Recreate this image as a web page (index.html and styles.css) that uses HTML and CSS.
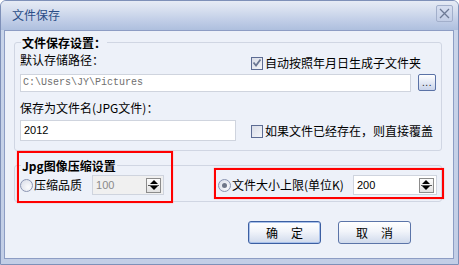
FILE: index.html
```html
<!DOCTYPE html>
<html lang="zh-CN">
<head>
<meta charset="utf-8">
<title>文件保存</title>
<link rel="stylesheet" href="styles.css">
</head>
<body>
<div class="window">
  <div class="titlebar">
    <span class="title">文件保存</span>
    <span class="close" aria-label="关闭">
      <svg width="11" height="11" viewBox="0 0 11 11"><path d="M1 1L10 10M10 1L1 10" stroke="#6d7a95" stroke-width="1.3" fill="none"/></svg>
    </span>
  </div>
  <div class="client">
    <div class="group group-save">
      <div class="group-title">文件保存设置：</div>
      <div class="row row-path-label">
        <span class="label">默认存储路径：</span>
        <label class="check check-auto">
          <span class="box checked"><svg width="10" height="10" viewBox="0 0 10 10"><path d="M1.5 4.5L4 7.5L8.5 1.5" stroke="#6b7793" stroke-width="1.8" fill="none"/></svg></span>
          <span class="check-text">自动按照年月日生成子文件夹</span>
        </label>
      </div>
      <div class="row row-path">
        <div class="textbox path">C:\Users\JY\Pictures</div>
        <div class="browse"><span>...</span></div>
      </div>
      <div class="row row-name-label">
        <span class="label">保存为文件名(JPG文件)：</span>
      </div>
      <div class="row row-name">
        <div class="textbox name">2012</div>
        <label class="check check-over">
          <span class="box"></span>
          <span class="check-text">如果文件已经存在，则直接覆盖</span>
        </label>
      </div>
    </div>
    <div class="group group-jpg">
      <div class="group-title">Jpg图像压缩设置</div>
      <div class="row row-jpg">
        <label class="radio radio-quality"><span class="circle"></span><span class="radio-text">压缩品质</span></label>
        <div class="spin disabled"><span class="spin-value">100</span><span class="spin-btn"><i class="up"></i><i class="down"></i></span></div>
        <label class="radio radio-size"><span class="circle on"></span><span class="radio-text">文件大小上限(单位K)</span></label>
        <div class="spin size"><span class="spin-value">200</span><span class="spin-btn"><i class="up"></i><i class="down"></i></span></div>
      </div>
    </div>
    <div class="buttons">
      <div class="btn default"><span>确</span><span>定</span></div>
      <div class="btn"><span>取</span><span>消</span></div>
    </div>
    <div class="mark mark-quality"></div>
    <div class="mark mark-size"></div>
  </div>
</div>
</body>
</html>
```
FILE: styles.css
```css
* { box-sizing: border-box; }
html, body { margin: 0; padding: 0; }
body {
  width: 459px;
  height: 265px;
  overflow: hidden;
  font-family: "Noto Sans CJK SC", "Noto Sans", sans-serif;
  font-size: 12px;
  color: #000;
}
.window {
  width: 459px;
  height: 265px;
  border: 1px solid #7e90b8;
  border-radius: 6px 6px 0 0;
  background: linear-gradient(#c9d5ea, #c2cee6);
  display: flex;
  flex-direction: column;
}
.titlebar {
  height: 29px;
  flex: none;
  display: flex;
  align-items: center;
  justify-content: space-between;
  padding: 0 5px 0 11px;
  background: linear-gradient(#e6ebf5 0%, #d4ddee 35%, #bfcce6 70%, #aebfde 100%);
  border-radius: 5px 5px 0 0;
}
.title {
  color: #2a4d87;
  font-size: 12px;
  line-height: 14px;
  margin-top: -2px;
}
.close {
  width: 17px;
  height: 17px;
  margin-top: -5px;
  border: 1px solid #a2afcb;
  border-radius: 2px;
  background: linear-gradient(#d6def0, #c3cee6);
  display: flex;
  align-items: center;
  justify-content: center;
}
.client {
  position: relative;
  margin: 0 4px 5px 3px;
  height: 229px;
  border: 1px solid #8d9dc4;
  background: #edf1f9;
  padding: 0 11px 0 9px;
  display: flex;
  flex-direction: column;
}
.group {
  border: 1px solid #d0d6e3;
  border-radius: 3px;
  padding: 0 5px 0 5px;
}
.group-save { margin-top: 11px; padding-bottom: 9px; }
.group-jpg { margin-top: 14px; padding-bottom: 6px; }
.group-title {
  width: max-content;
  margin: -7px 0 0 1px;
  padding: 0 1px;
  background: #edf1f9;
  font-weight: bold;
  line-height: 13px;
  height: 13px;
  font-size: 12px;
}
.row { display: flex; align-items: flex-start; }
.row > * { flex: none; white-space: nowrap; }
.label { line-height: 14px; }
.row-path-label { margin-top: 4px; height: 17px; }
.check {
  display: flex;
  align-items: center;
  gap: 2px;
  line-height: 14px;
}
.check-auto { margin-left: auto; margin-right: 15px; margin-top: 3px; }
.box {
  width: 12px;
  height: 13px;
  border: 1px solid #5d6c93;
  background: linear-gradient(135deg, #d9dde8, #f4f5f8);
  display: flex;
  align-items: center;
  justify-content: center;
}
.row-path { margin-top: 4px; gap: 7px; }
.textbox {
  background: #fff;
  border: 1px solid #cfd4de;
}
.path {
  width: 391px;
  height: 18px;
  padding-left: 2px;
  font-family: "Liberation Mono", "DejaVu Sans Mono", monospace;
  font-size: 10px;
  line-height: 16px;
  color: #707070;
}
.browse {
  width: 18px;
  height: 17px;
  border: 1px solid #5a72a6;
  border-radius: 2px;
  background: linear-gradient(#ffffff, #c8d3ea);
  display: flex;
  justify-content: center;
  align-items: flex-end;
  font-family: "Liberation Sans", sans-serif;
  font-size: 10px;
  line-height: 10px;
  padding-bottom: 2px;
  color: #222;
  letter-spacing: 0.5px;
}
.row-name-label { margin-top: 9px; }
.row-name { margin-top: 5px; }
.name {
  width: 216px;
  height: 21px;
  padding-left: 3px;
  font-family: "Liberation Sans", sans-serif;
  font-size: 11px;
  line-height: 19px;
}
.check-over { margin-left: 15px; margin-top: 4px; }
.row-jpg { margin-top: 3px; align-items: center; height: 20px; }
.radio {
  display: flex;
  align-items: center;
  gap: 1px;
  line-height: 14px;
}
.radio-text { white-space: nowrap; }
.circle {
  flex: none;
  width: 13px;
  height: 13px;
  border-radius: 50%;
  border: 1px solid #8b95b2;
  background: radial-gradient(circle at 65% 65%, #fbfbfd, #d6dae6);
  display: flex;
  align-items: center;
  justify-content: center;
}
.circle.on::after {
  content: "";
  width: 5px;
  height: 5px;
  border-radius: 50%;
  background: #6f7688;
}
.spin {
  display: flex;
  align-items: center;
  justify-content: space-between;
  border: 1px solid #cfd4de;
  background: #fff;
  padding: 0 2px 0 3px;
  font-family: "Liberation Sans", sans-serif;
  font-size: 11px;
}
.spin.disabled {
  width: 72px;
  height: 20px;
  margin-left: 10px;
  background: #f0f0f0;
  color: #8a8a8a;
}
.spin.size {
  width: 84px;
  height: 20px;
  margin-left: 9px;
}
.radio-size { margin-left: 54px; }
.spin-btn {
  width: 15px;
  height: 15px;
  border: 1px solid #8c8c8c;
  background: linear-gradient(#fdfdfd, #e2e2e2);
  display: flex;
  flex-direction: column;
  align-items: center;
  justify-content: space-around;
  position: relative;
}
.spin-btn::after {
  content: "";
  position: absolute;
  left: 1px;
  right: 1px;
  top: 6px;
  border-top: 1px solid #555;
}
.spin-btn .up {
  width: 0; height: 0;
  border-left: 4px solid transparent;
  border-right: 4px solid transparent;
  border-bottom: 4px solid #000;
}
.spin-btn .down {
  width: 0; height: 0;
  border-left: 4px solid transparent;
  border-right: 4px solid transparent;
  border-top: 4px solid #000;
}
.buttons {
  display: flex;
  justify-content: flex-end;
  gap: 17px;
  margin-top: 19px;
  padding-right: 31px;
}
.btn {
  width: 73px;
  height: 23px;
  border: 1px solid #5b74a8;
  border-radius: 3px;
  background: linear-gradient(#ffffff 0%, #f1f4fa 45%, #d0daec 100%);
  display: flex;
  justify-content: center;
  align-items: center;
  gap: 13px;
  line-height: 14px;
}
.btn.default {
  border-color: #3c5fa2;
  box-shadow: inset 0 0 0 1px #a9c1ea;
}
.mark {
  position: absolute;
  border: 2px solid #ff0000;
  box-shadow: 0 0 1px #ff8080;
}
.mark-quality { left: 12px; top: 120px; width: 156px; height: 52px; }
.mark-size { left: 209px; top: 137px; width: 230px; height: 31px; }
```
